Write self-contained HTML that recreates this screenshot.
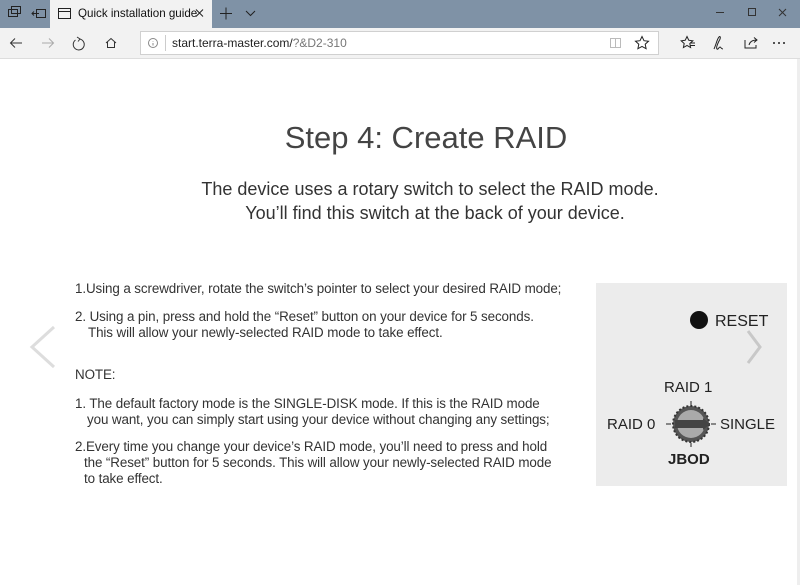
<!DOCTYPE html>
<html><head><style>
*{margin:0;padding:0;box-sizing:border-box}
body{width:800px;height:585px;overflow:hidden;background:#fff;font-family:"Liberation Sans",sans-serif;position:relative}
.abs{position:absolute}
.tb{left:0;top:0;width:800px;height:28px;background:#7f92a6}
.tab{left:50px;top:0;width:162px;height:28px;background:#f2f2f2}
.nav{left:0;top:28px;width:800px;height:31px;background:#f2f2f2;border-bottom:1px solid #ddd}
.addr{left:140px;top:31px;width:519px;height:24px;background:#fff;border:1px solid #d0d0d0}
.txt{color:#333;font-size:13.4px;white-space:nowrap;letter-spacing:-0.1px}
</style></head><body>
<div class="abs tb"></div>
<div class="abs tab"></div>
<svg class="abs" style="left:0;top:0" width="800" height="28">
<g fill="none" stroke="#222" stroke-width="1">
<rect x="8.5" y="9.5" width="9" height="7"/><rect x="11.5" y="6.5" width="9" height="7"/>
<rect x="36.5" y="9.5" width="9" height="8"/><path d="M32 13.5h7M34 11.5l-2 2 2 2"/>
<rect x="58.5" y="8.5" width="12" height="10"/><path d="M58.5 11.5h12"/>
<path d="M196 9.5l7 7M203 9.5l-7 7"/>
<path d="M220 13.5h12M226 7.5v12"/>
<path d="M246 11l4.5 4.5L255 11"/>
<path d="M716 12.5h8" stroke="#333"/><rect x="748.5" y="8.5" width="7" height="7" stroke="#333"/>
<path d="M779 9l7 7M786 9l-7 7" stroke="#333"/>
</g>
</svg>
<div class="abs" style="left:78px;top:7px;font-size:11.6px;color:#111">Quick installation guide</div>
<div class="abs nav"></div>
<div class="abs addr"></div>
<svg class="abs" style="left:0;top:28px" width="800" height="31">
<g fill="none" stroke-width="1">
<path d="M11 15h11M15 10.5L10.5 15l4.5 4.5" stroke="#333"/>
<path d="M42 15h11M49 10.5l4.5 4.5L49 19.5" stroke="#aaa"/>
<path d="M75.5 12a5.5 5.5 0 1 0 4 -1" stroke="#333"/><path d="M77 9l3 2-2 2.5" stroke="#333"/>
<path d="M106 15l5-4.5 5 4.5M107.5 14v5.5h7V14" stroke="#333"/>
<circle cx="153" cy="15" r="4.5" stroke="#888"/><path d="M153 13.5v.5M153 15v2.5" stroke="#888"/>
<path d="M165.5 7v16" stroke="#ccc"/>
<rect x="610.5" y="10.5" width="10" height="9" stroke="#bbb"/><path d="M615.5 10.5v9" stroke="#bbb"/>
<path d="M642 8.5l2 4.2 4.5.5-3.3 3 .9 4.5-4.1-2.3-4.1 2.3.9-4.5-3.3-3 4.5-.5z" stroke="#222"/>
<path d="M687 8.5l1.8 3.8 4 .5-3 2.7.8 4-3.6-2-3.6 2 .8-4-3-2.7 4-.5zM690 15h5M690 17.5h5" stroke="#222"/>
<path d="M714 21c2-4 3-10 5-12 1.5-1.5 2 1 0 4-1.5 3-3 7-2 8 1 1 2-2 3-2s1 2 3 2" stroke="#222"/>
<path d="M745 12v8h11v-3M749 17c1-4 4-5 8-5M754 9.5l3 2.5-3 2.5" stroke="#222"/>
</g>
<g fill="#222"><circle cx="774" cy="15" r="1"/><circle cx="779" cy="15" r="1"/><circle cx="784" cy="15" r="1"/></g>
</svg>
<div class="abs" style="left:172px;top:36px;font-size:12px;color:#222">start.terra-master.com/<span style="color:#777">?&amp;D2-310</span></div>

<div class="abs" style="left:0;top:120px;width:852px;text-align:center;font-size:31px;color:#444">Step 4: Create RAID</div>
<div class="abs" style="left:0;top:177px;width:860px;text-align:center;font-size:18px;line-height:24px;color:#333">The device uses a rotary switch to select the RAID mode.<br>&nbsp;&nbsp;You’ll find this switch at the back of your device.</div>

<div class="abs txt" style="left:75px;top:281px">1.Using a screwdriver, rotate the switch’s pointer to select your desired RAID mode;</div>
<div class="abs txt" style="left:75px;top:309px">2. Using a pin, press and hold the “Reset” button on your device for 5 seconds.</div>
<div class="abs txt" style="left:88px;top:325px">This will allow your newly-selected RAID mode to take effect.</div>
<div class="abs txt" style="left:75px;top:367px">NOTE:</div>
<div class="abs txt" style="left:75px;top:396px">1. The default factory mode is the SINGLE-DISK mode. If this is the RAID mode</div>
<div class="abs txt" style="left:87px;top:412px">you want, you can simply start using your device without changing any settings;</div>
<div class="abs txt" style="left:75px;top:439px">2.Every time you change your device’s RAID mode, you’ll need to press and hold</div>
<div class="abs txt" style="left:84px;top:455px">the “Reset” button for 5 seconds. This will allow your newly-selected RAID mode</div>
<div class="abs txt" style="left:84px;top:471px">to take effect.</div>

<svg class="abs" style="left:28px;top:325px" width="30" height="44"><path d="M26 2L4 22l22 20" fill="none" stroke="#ddd" stroke-width="3"/></svg>

<div class="abs" style="left:596px;top:283px;width:191px;height:203px;background:#ececec"></div>
<svg class="abs" style="left:596px;top:283px" width="191" height="203">
<circle cx="103" cy="37" r="9" fill="#111"/>
<text x="119" y="43" font-family="Liberation Sans" font-size="16" fill="#222">RESET</text>
<path d="M152 48l12 16-12 16" fill="none" stroke="#c8c8c8" stroke-width="3"/>
<text x="68" y="109" font-family="Liberation Sans" font-size="15" fill="#222">RAID 1</text>
<text x="11" y="146" font-family="Liberation Sans" font-size="15" fill="#222">RAID 0</text>
<text x="124" y="146" font-family="Liberation Sans" font-size="15" fill="#222">SINGLE</text>
<text x="72" y="181" font-family="Liberation Sans" font-size="15" font-weight="bold" fill="#222">JBOD</text>
<circle cx="95" cy="141" r="18" fill="#555" stroke="#333" stroke-width="2" stroke-dasharray="2 2"/>
<circle cx="95" cy="141" r="14" fill="#aaa"/>
<rect x="79" y="137" width="28" height="8" fill="#444"/>
<path d="M107 135l7 6-7 6z" fill="#444"/>
<path d="M95 118v4M95 160v4M70 141h5M115 141h5" stroke="#222"/>
</svg>
<div class="abs" style="left:797px;top:59px;width:3px;height:526px;background:#eee"></div>
</body></html>
